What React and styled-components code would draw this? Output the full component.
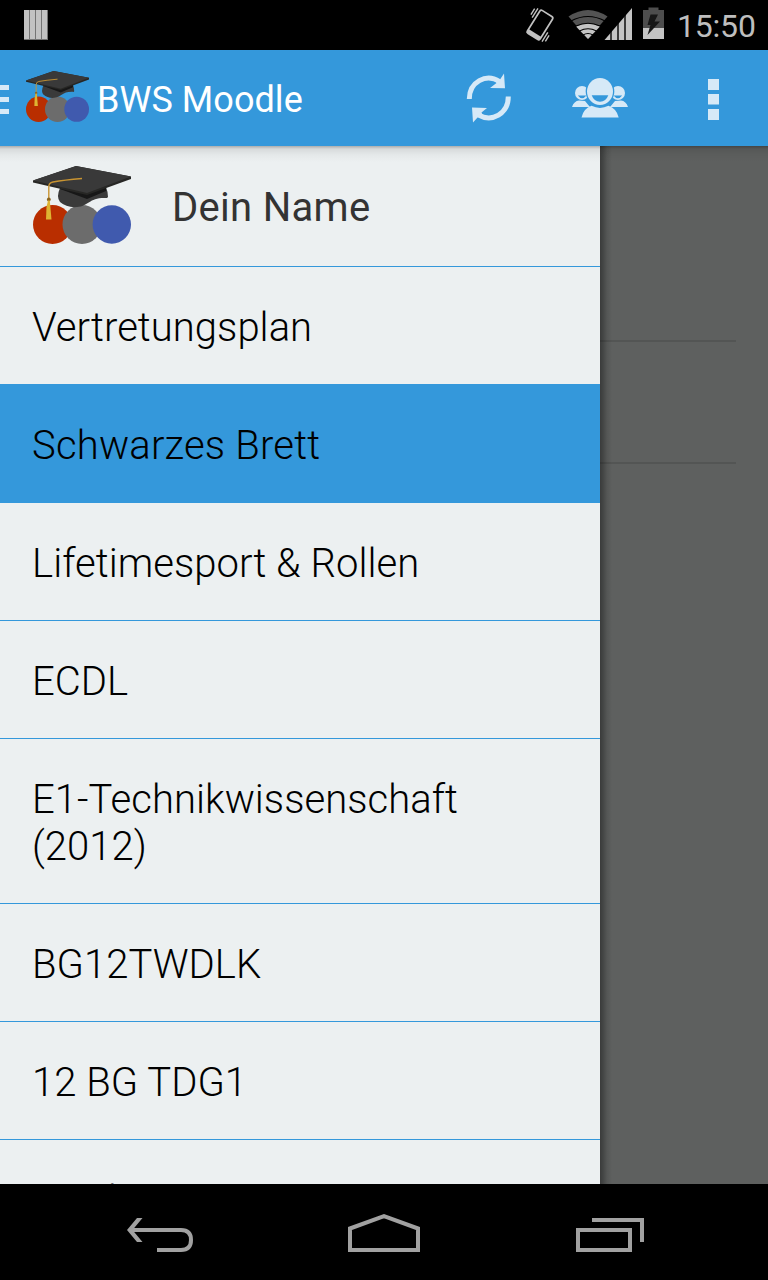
import React from "react";
import styled, { createGlobalStyle } from "styled-components";

const BLUE = "#3498db";
const ICON = "#d6e9f7";

const Global = createGlobalStyle`
  * { box-sizing: border-box; }
  body { margin: 0; background: #000; font-family: Roboto, "Liberation Sans", sans-serif; }
`;

const Screen = styled.div`
  width: 768px;
  height: 1280px;
  display: flex;
  flex-direction: column;
  overflow: hidden;
  background: #000;
`;

const StatusBar = styled.header`
  flex: 0 0 50px;
  height: 50px;
  display: flex;
  align-items: flex-start;
  justify-content: space-between;
  padding-right: 12px;
`;

const StatusIcons = styled.div`
  display: flex;
  align-items: flex-start;
  height: 50px;
`;

const Clock = styled.time`
  width: 79px;
  height: 50px;
  margin-left: 11px;
  line-height: 52px;
  font-size: 32px;
  font-weight: 400;
  letter-spacing: -0.2px;
  color: #bebebe;
  white-space: nowrap;
`;

const ActionBar = styled.nav`
  flex: 0 0 96px;
  display: flex;
  align-items: center;
  background: ${BLUE};
`;

const DrawerHandle = styled.div`
  width: 9px;
  display: flex;
  flex-direction: column;
  gap: 7px;
  margin: 3px 17px 0 0;
`;

const HandleBar = styled.span`
  height: 5px;
  background: ${ICON};
`;

const BarLogo = styled.div`
  display: flex;
  margin-bottom: 3px;
`;

const ProfileLogo = styled.div`
  display: flex;
  margin-bottom: 2px;
`;

const Title = styled.h1`
  flex: 1;
  margin: 3px 0 0 8px;
  font-size: 36px;
  line-height: 44px;
  font-weight: 400;
  letter-spacing: 0.05px;
  color: #fff;
`;

const Actions = styled.div`
  display: flex;
`;

const ActionButton = styled.button`
  width: 112px;
  height: 96px;
  padding: 0;
  border: 0;
  background: transparent;
  display: block;
`;

const Main = styled.main`
  position: relative;
  flex: 0 0 1038px;
  display: flex;
  overflow: hidden;
  background: #5e605f;

  &::after {
    content: "";
    position: absolute;
    inset: 0 0 auto 0;
    height: 16px;
    background: linear-gradient(rgba(0, 0, 0, 0.28), rgba(0, 0, 0, 0.09) 3px, rgba(0, 0, 0, 0.03) 9px, transparent);
  }
`;

const Drawer = styled.aside`
  flex: 0 0 600px;
  background: #ecf0f1;
`;

const Profile = styled.div`
  height: 121px;
  display: flex;
  align-items: center;
  padding-left: 33px;
  border-bottom: 1px solid ${BLUE};
`;

const ProfileName = styled.div`
  margin: 2px 0 0 41px;
  font-size: 40px;
  line-height: 47px;
  letter-spacing: 0.3px;
  color: #333;
`;

const Course = styled.div`
  padding: 37px 100px 33px 32px;
  border-bottom: 1px solid ${BLUE};
  background: ${(p) => (p.$active ? BLUE : "transparent")};
  font-size: 40px;
  line-height: 47px;
  font-weight: 300;
  letter-spacing: ${(p) => (p.$active ? "0.2px" : "0.04px")};
  color: #000;
`;

const Backdrop = styled.section`
  flex: 1;
  background: linear-gradient(90deg, rgba(0,0,0,.38), rgba(0,0,0,.28) 3px, rgba(0,0,0,.1) 7px, transparent 12px);
`;

const BackdropRow = styled.div`
  width: 136px;
  height: ${(p) => p.$height}px;
  border-bottom: 2px solid rgba(0, 0, 0, 0.11);
`;

const NavBar = styled.footer`
  flex: 0 0 96px;
  display: flex;
  justify-content: center;
`;

const NavButton = styled.button`
  width: 226px;
  height: 96px;
  padding: 0;
  border: 0;
  background: transparent;
`;

function CapLogo({ width, height }) {
  return (
    <svg width={width} height={height} viewBox="0 0 98 78" preserveAspectRatio="none">
      <circle cx="19.5" cy="58.5" r="19.5" fill="#b92e00" />
      <circle cx="49" cy="58.5" r="19.5" fill="#6c6c6c" />
      <circle cx="78.8" cy="58.5" r="19.2" fill="#405aae" />
      <path d="M27 22Q23 31 27 36Q34 42 44 41C56 40 56 31 74 32L75 31Q75 26 73 21L53 29Z" fill="#3a3a3a" />
      <path d="M27 23L54 33L73 25L73 20L27 19Z" fill="#171717" />
      <path d="M0 14.5L43 0L98 10.5L98 13L54 29L0 16.5Z" fill="#272725" />
      <path d="M0 14.5L43 0L98 10.5L54 27Z" fill="#393939" />
      <path d="M49 12.5Q31 14 20 16Q15.5 17 15.8 21V34" fill="none" stroke="#c89432" strokeWidth="1.4" />
      <circle cx="15.8" cy="33.5" r="1.9" fill="#8b6420" />
      <path d="M15 34.5H16.8L18.5 53.5H13L13.5 41Z" fill="#deb432" />
    </svg>
  );
}

function StatusGlyphs() {
  return (
    <svg width="156" height="50" viewBox="510 0 156 50">
      <g transform="rotate(32 540 25)" fill="none" stroke="#c1c1c1">
        <rect x="532.5" y="11.5" width="15" height="27" rx="2" strokeWidth="1.7" />
        <path d="M532.5 36.5H547.5" strokeWidth="4" />
        <path d="M529.5 12V23M526.8 14V21M550.5 27V38M553.2 29V36" strokeWidth="1.4" />
      </g>
      <path d="M588 39L568.5 16.5Q588 3.500 607.5 16.5Z" fill="#535353" />
      <path d="M588 39L576 26.4Q588 20.8 600 26.4Z" fill="#c4c4c4" />
      <path d="M571 21Q588 12 605 21M576 26Q588 20.500 600 26M579.5 31Q588 26.500 596.500 31M583 35Q588 32 593 35" fill="none" stroke="#000" strokeWidth="1.2" />
      <path d="M604.5 40L632 8V40Z" fill="#c4c4c4" />
      <path d="M611 8V40M618 8V40M625 8V40" stroke="#000" strokeWidth="1.4" />
      <path d="M643 10H648.5V7.5H658.5V10H664V39H643Z" fill="#4d4d4d" />
      <path d="M643 28H664V39H643Z" fill="#c4c4c4" />
      <path d="M650.5 14.5H658L654.5 21.5H660L647.5 35L650.5 25H647.5Z" fill="#171717" />
    </svg>
  );
}

const courses = [
  { name: "Vertretungsplan" },
  { name: "Schwarzes Brett", active: true },
  { name: "Lifetimesport & Rollen" },
  { name: "ECDL" },
  { name: "E1-Technikwissenschaft (2012)" },
  { name: "BG12TWDLK" },
  { name: "12 BG TDG1" },
  { name: "Spiele" },
];

export default function App() {
  return (
    <Screen>
      <Global />
      <StatusBar>
        <svg width="60" height="50">
          <path d="M24 10H48V40H24Z" fill="#747474" />
          <path d="M24 10H29V39H24ZM30 10H35V39H30ZM36 10H41V39H36ZM42 10H47V39H42Z" fill="#c2c2c2" />
        </svg>
        <StatusIcons>
          <StatusGlyphs />
          <Clock>15:50</Clock>
        </StatusIcons>
      </StatusBar>
      <ActionBar>
        <DrawerHandle><HandleBar /><HandleBar /><HandleBar /></DrawerHandle>
        <BarLogo><CapLogo width={63} height={51} /></BarLogo>
        <Title>BWS Moodle</Title>
        <Actions>
          <ActionButton aria-label="Aktualisieren">
            <svg width="112" height="96" viewBox="432 50 112 96" fill="none" stroke={ICON} strokeWidth="5">
              <path d="M469.3 99C469.3 82 486 73 499.5 81.5M508.3 96.5C508.3 114 492 122.5 478.5 115" />
              <path d="M504 73.5L505 88.2L490 88L496.5 83L494.5 79L500 79.5ZM473 122.5L472 107.5L487 108L481.5 112.5L483.5 117L478 117Z" fill={ICON} stroke="none" />
            </svg>
          </ActionButton>
          <ActionButton aria-label="Teilnehmer">
            <svg width="112" height="96" viewBox="544 50 112 96">
              <g fill={ICON}>
                <circle cx="582" cy="93" r="7" />
                <circle cx="618" cy="93" r="7" />
                <path d="M572 107Q574 101 579 100.5L585 101L590 107ZM628 107Q626 101 621 100.5L615 101L610 107Z" />
              </g>
              <path d="M577.8 95.5H586.5Q582 101 577.8 95.5M622.2 95.5H613.5Q618 101 622.2 95.5" fill={BLUE} />
              <ellipse cx="600" cy="91.5" rx="14.3" ry="14.8" fill={BLUE} />
              <ellipse cx="600" cy="91.5" rx="13" ry="13.5" fill={ICON} />
              <path d="M591.7 95.3H608.3Q606 101.7 600 101.7T591.7 95.3" fill={BLUE} />
              <path d="M581.5 117.5Q583.5 108.5 591.5 105.8Q600 110 608.5 105.8Q616.5 108.5 618.7 117.5Z" fill={ICON} />
            </svg>
          </ActionButton>
          <ActionButton aria-label="Mehr">
            <svg width="112" height="96" viewBox="656 50 112 96" fill={ICON}>
              <path d="M708 79H719V90H708ZM708 94H719V104.500H708ZM708 109H719V120H708Z" />
            </svg>
          </ActionButton>
        </Actions>
      </ActionBar>
      <Main>
        <Drawer>
          <Profile>
            <ProfileLogo><CapLogo width={98} height={78} /></ProfileLogo>
            <ProfileName>Dein Name</ProfileName>
          </Profile>
          {courses.map((c) => (
            <Course key={c.name} $active={c.active}>{c.name}</Course>
          ))}
        </Drawer>
        <Backdrop>
          <BackdropRow $height={196} />
          <BackdropRow $height={122} />
        </Backdrop>
      </Main>
      <NavBar>
        <NavButton aria-label="Zurück">
          <svg width="226" height="96" viewBox="45 1184 226 96" fill="none" stroke="#a1a1a1" strokeWidth="4">
            <path d="M131 1230H181Q191 1230 191 1240T181 1250H157" />
            <path d="M127 1230L137 1218H142.500L132.500 1230L142.500 1242H137Z" fill="#a1a1a1" stroke="none" />
          </svg>
        </NavButton>
        <NavButton aria-label="Startseite">
          <svg width="226" height="96" viewBox="271 1184 226 96" fill="none" stroke="#a1a1a1" strokeWidth="4">
            <path d="M350 1228.500L384 1216.200L418 1228.500V1250H350Z" />
          </svg>
        </NavButton>
        <NavButton aria-label="Letzte Apps">
          <svg width="226" height="96" viewBox="497 1184 226 96" fill="none" stroke="#a1a1a1" strokeWidth="4">
            <path d="M578 1230H630V1250H578ZM592 1220H642V1242" />
          </svg>
        </NavButton>
      </NavBar>
    </Screen>
  );
}
